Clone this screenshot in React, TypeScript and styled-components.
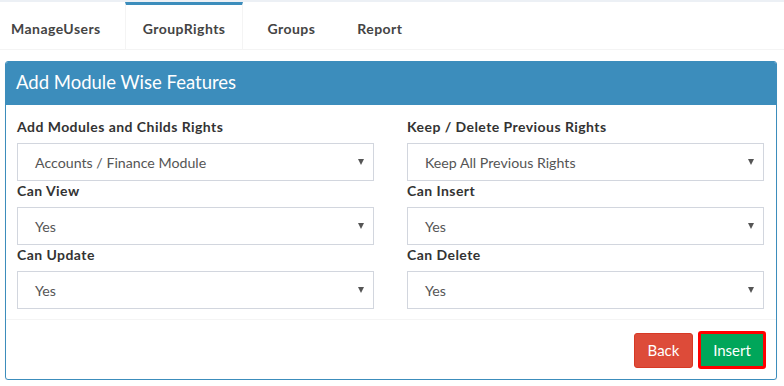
import React from "react";
import styled, { createGlobalStyle } from "styled-components";

const Global = createGlobalStyle`
  html, body { margin: 0; padding: 0; background: #fff; }
  body { font-family: Lato, "Liberation Sans", sans-serif; color: #333; }
  * { box-sizing: border-box; }
`;

const Page = styled.div`
  border-top: 2px solid #ecf0f5;
  width: 784px;
`;

const TabBar = styled.ul`
  display: flex;
  list-style: none;
  margin: 0 0 0 -7px;
  padding: 0;
  border-bottom: 1px solid #f4f4f4;
`;

const Tab = styled.li<{ $active?: boolean }>`
  margin-right: 6px;
  padding: 14px 17px 10px;
  border-top: 3px solid ${(p) => (p.$active ? "#3c8dbc" : "transparent")};
  border-left: 1px solid ${(p) => (p.$active ? "#f4f4f4" : "transparent")};
  border-right: 1px solid ${(p) => (p.$active ? "#f4f4f4" : "transparent")};
  font-size: 14px;
  line-height: 20px;
  font-weight: 700;
  letter-spacing: 0.45px;
  color: #444;
`;

const Box = styled.div`
  margin: 11px 7px 0 5px;
  border: 1px solid #3c8dbc;
  border-radius: 3px;
  box-shadow: 0 1px 1px rgba(0, 0, 0, 0.1);
  overflow: hidden;
`;

const BoxHeader = styled.div`
  background: #3c8dbc;
  height: 43px;
  display: flex;
  align-items: center;
  padding: 0 0 3px 10px;
`;

const Title = styled.h3`
  margin: 0;
  font-size: 18.5px;
  font-weight: 400;
  color: #fff;
  line-height: 1;
`;

const BoxBody = styled.div`
  padding: 12px 12px 10px 11px;
  display: grid;
  grid-template-columns: 1fr 1fr;
  column-gap: 33px;
`;

const Field = styled.div`
  display: flex;
  flex-direction: column;
`;

const Label = styled.label`
  font-size: 14px;
  font-weight: 700;
  line-height: 20px;
  letter-spacing: 0.45px;
  color: #333;
  margin-bottom: 6px;
`;

const Select = styled.div`
  position: relative;
  height: 38px;
  border: 1px solid #d2d6de;
  display: flex;
  align-items: center;
  padding-left: 17px;
  font-size: 14.2px;
  color: #555;
`;

const Caret = styled.span`
  position: absolute;
  right: 9px;
  top: 15px;
  width: 0;
  height: 0;
  border-left: 3.5px solid transparent;
  border-right: 3.5px solid transparent;
  border-top: 6px solid #555;
`;

const BoxFooter = styled.div`
  border-top: 1px solid #f4f4f4;
  padding: 11px 10px 10px 10px;
  display: flex;
  justify-content: flex-end;
  align-items: center;
  gap: 5px;
`;

const Button = styled.button<{ $variant: "back" | "insert" }>`
  font-family: Lato, "Liberation Sans", sans-serif;
  font-size: 15px;
  color: #fff;
  border-radius: 3px;
  cursor: pointer;
  background: ${(p) => (p.$variant === "back" ? "#dd4b39" : "#00a65a")};
  border: ${(p) => (p.$variant === "back" ? "1px solid #d73925" : "3px solid #ff0000")};
  height: ${(p) => (p.$variant === "back" ? "35px" : "38px")};
  width: ${(p) => (p.$variant === "back" ? "59px" : "68px")};
  padding: 0;
`;

const fields: [string, string][] = [
  ["Add Modules and Childs Rights", "Accounts / Finance Module"],
  ["Keep / Delete Previous Rights", "Keep All Previous Rights"],
  ["Can View", "Yes"],
  ["Can Insert", "Yes"],
  ["Can Update", "Yes"],
  ["Can Delete", "Yes"],
];

export default function App() {
  return (
    <Page>
      <Global />
      <TabBar>
        <Tab>ManageUsers</Tab>
        <Tab $active>GroupRights</Tab>
        <Tab>Groups</Tab>
        <Tab>Report</Tab>
      </TabBar>
      <Box>
        <BoxHeader>
          <Title>Add Module Wise Features</Title>
        </BoxHeader>
        <BoxBody>
          {fields.map(([label, value]) => (
            <Field key={label}>
              <Label>{label}</Label>
              <Select>
                {value}
                <Caret />
              </Select>
            </Field>
          ))}
        </BoxBody>
        <BoxFooter>
          <Button $variant="back">Back</Button>
          <Button $variant="insert">Insert</Button>
        </BoxFooter>
      </Box>
    </Page>
  );
}
